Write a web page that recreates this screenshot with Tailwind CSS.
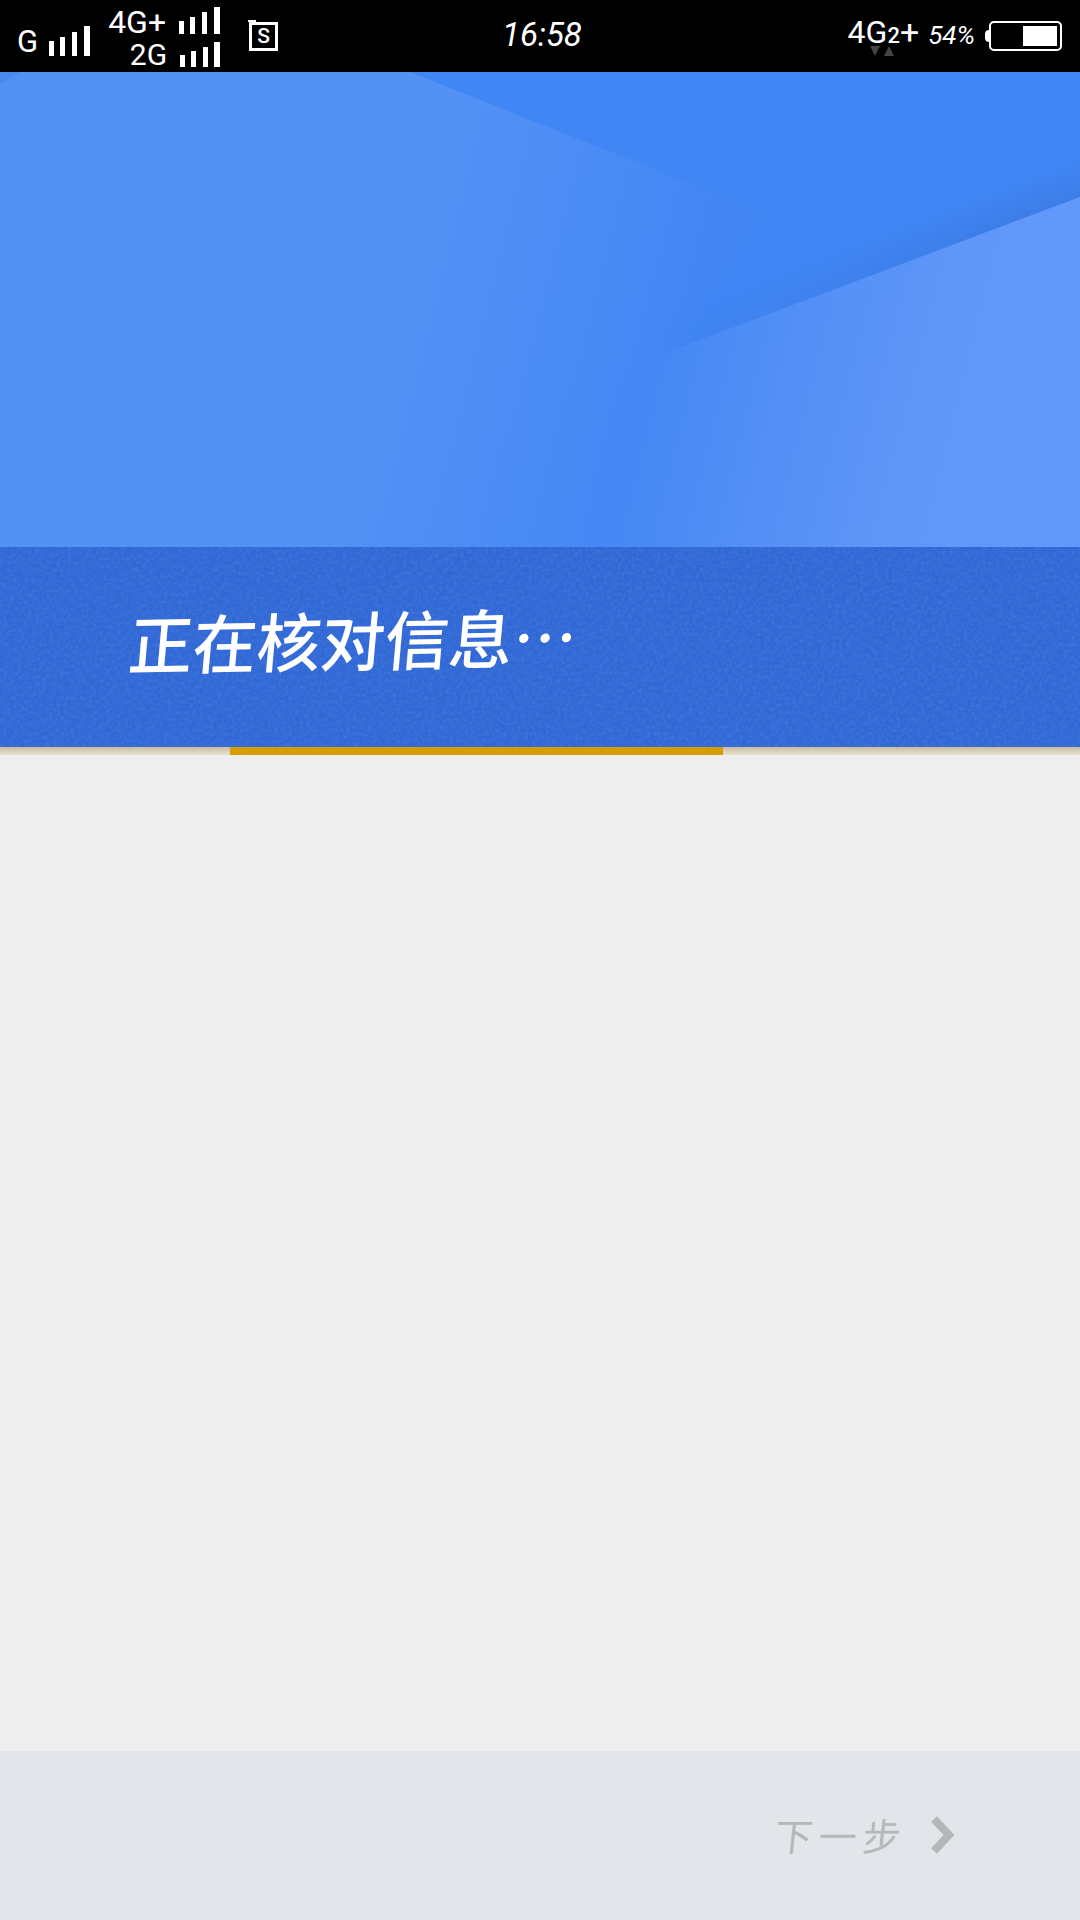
<!DOCTYPE html>
<html lang="zh-CN">
<head>
  <meta charset="UTF-8">
  <meta name="viewport" content="width=device-width, initial-scale=1.0">
  <title>正在核对信息</title>
  <script src="https://cdn.jsdelivr.net/npm/@tailwindcss/browser@4"></script>
</head>
<body class="w-[1080px] h-[1920px] overflow-hidden bg-[#eeeeee] font-['Roboto','Noto_Sans_CJK_SC',sans-serif]">
  <div class="flex flex-col h-full">
    <!-- Status bar -->
    <header class="relative flex items-center justify-between h-[72px] shrink-0 bg-black text-white pl-[17px] pr-[18px]">
      <div class="flex items-center">
        <span class="text-[31px] leading-none mt-[10px]">G</span>
        <svg class="ml-[11px] mt-[10px]" width="41" height="30" viewBox="0 0 41 30" fill="#fff"><rect x="0" y="15" width="5" height="15"/><rect x="11" y="11" width="5" height="19"/><rect x="23" y="6" width="5" height="24"/><rect x="35" y="0" width="6" height="30"/></svg>
        <div class="flex flex-col items-end ml-[18px]">
          <div class="flex items-end h-[36px]">
            <span class="text-[32px] leading-none">4G+</span>
            <svg class="ml-[13px] mb-[4px]" width="41" height="27" viewBox="0 0 41 27" fill="#fff"><rect x="0" y="14" width="5" height="13"/><rect x="11" y="10" width="5" height="17"/><rect x="23" y="5" width="5" height="22"/><rect x="35" y="0" width="6" height="27"/></svg>
          </div>
          <div class="flex items-end h-[32px]">
            <span class="text-[30px] leading-none">2G</span>
            <svg class="ml-[13px] mb-[3px]" width="40" height="25" viewBox="0 0 40 25" fill="#fff"><rect x="0" y="13" width="5" height="12"/><rect x="11" y="9" width="5" height="16"/><rect x="23" y="5" width="5" height="20"/><rect x="34" y="0" width="6" height="25"/></svg>
          </div>
        </div>
        <!-- SIM icon -->
        <div class="relative flex items-center justify-center w-[29px] h-[29px] ml-[29px] mt-[1px] border-[3px] border-white">
          <span class="absolute -left-[4px] -top-[5px] w-[8px] h-[2px] bg-white"></span>
          <span class="text-[21px] leading-none font-medium">S</span>
        </div>
      </div>
      <span class="absolute left-[502px] top-[18px] text-[33px] leading-none italic">16:58</span>
      <div class="flex items-center">
        <div class="relative flex items-end -mt-[10px]">
          <span class="text-[32px] leading-none">4G</span>
          <span class="text-[22px] leading-none font-medium mb-[1px]">2</span>
          <span class="text-[34px] leading-none -mb-[1px]">+</span>
          <svg class="absolute left-[22px] top-[31px]" width="24" height="10" viewBox="0 0 24 10" fill="#444"><path d="M0 0 H10 L5 10 Z"/><path d="M14 10 H24 L19 0 Z"/></svg>
        </div>
        <span class="ml-[9px] -mt-[3px] text-[26px] leading-none italic">54%</span>
        <span class="ml-[10px] w-[4px] h-[12px] rounded-l-sm bg-white"></span>
        <div class="flex justify-end w-[73px] h-[30px] p-[3px] border-[2px] border-white rounded-[5px]">
          <span class="w-[34px] bg-white"></span>
        </div>
      </div>
    </header>

    <!-- Banner -->
    <section class="relative h-[475px] shrink-0 bg-[#5591f5]">
      <svg class="absolute inset-0" width="1080" height="475" viewBox="0 0 1080 475">
        <defs>
          <linearGradient id="left" gradientUnits="userSpaceOnUse" x1="450" y1="0" x2="740" y2="73">
            <stop offset="0" stop-color="#5491f5"/>
            <stop offset="1" stop-color="#4386f4"/>
          </linearGradient>
          <linearGradient id="right" gradientUnits="userSpaceOnUse" x1="450" y1="0" x2="1060" y2="153">
            <stop offset="0" stop-color="#5491f5"/>
            <stop offset="0.42" stop-color="#4587f4"/>
            <stop offset="0.58" stop-color="#4f8df5"/>
            <stop offset="0.85" stop-color="#5f96f8"/>
            <stop offset="1" stop-color="#6298f9"/>
          </linearGradient>
          <linearGradient id="edge" gradientUnits="userSpaceOnUse" x1="818" y1="187" x2="830" y2="219">
            <stop offset="0" stop-color="#3a77dd" stop-opacity="0"/>
            <stop offset="1" stop-color="#3a77dd" stop-opacity="0.6"/>
          </linearGradient>
          <linearGradient id="fade" gradientUnits="userSpaceOnUse" x1="660" y1="0" x2="1000" y2="0">
            <stop offset="0" stop-color="#000"/>
            <stop offset="1" stop-color="#fff"/>
          </linearGradient>
          <mask id="edge-mask"><rect width="1080" height="475" fill="url(#fade)"/></mask>
        </defs>
        <rect width="1080" height="475" fill="url(#left)"/>
        <polygon points="410,0 1080,0 1080,125 680,275 757,138" fill="#4186f5"/>
        <polygon points="1080,89 1080,125 660,283 660,247" fill="url(#edge)" mask="url(#edge-mask)"/>
        <polygon points="1080,125 585,311 330,475 1080,475" fill="url(#right)"/>
        <polygon points="0,0 20,0 0,12" fill="#4a88f1"/>
      </svg>
    </section>

    <!-- Status message -->
    <section class="relative h-[200px] shrink-0 bg-[#3068d6]">
      <svg class="absolute inset-0 opacity-[0.1]" width="1080" height="200">
        <filter id="grain"><feTurbulence type="fractalNoise" baseFrequency="0.28" numOctaves="2"/><feColorMatrix values="0 0 0 0 1  0 0 0 0 1  0 0 0 0 1  1.6 0 0 0 -0.6"/></filter>
        <rect width="1080" height="200" filter="url(#grain)"/>
      </svg>
      <p class="relative pl-[132px] pt-[59px] text-[64px] leading-[76px] text-white font-['Noto_Sans_CJK_SC',sans-serif] font-medium -skew-x-6 -rotate-1 origin-left whitespace-nowrap">正在核对信息…</p>
    </section>

    <!-- Progress -->
    <div class="h-[8px] shrink-0 bg-gradient-to-b from-[#c9bd9b] to-[#e6e1d3]">
      <div class="ml-[230px] w-[493px] h-full bg-[#d69d00]"></div>
    </div>

    <main class="flex-1 bg-[#eeeeee]"></main>

    <!-- Footer -->
    <footer class="flex justify-end items-center h-[169px] shrink-0 bg-[#e2e6ea] pr-[125px] pb-[2px]">
      <span class="text-[38px] leading-none tracking-[6px] text-[#b5b7b9] font-['Noto_Sans_CJK_SC',sans-serif] -skew-x-6">下一步</span>
      <svg class="ml-[24px]" width="24" height="38" viewBox="0 0 24 38" fill="none" stroke="#b4b6b8" stroke-width="8"><path d="M3 3 L18 19 L3 35"/></svg>
    </footer>
  </div>
</body>
</html>
